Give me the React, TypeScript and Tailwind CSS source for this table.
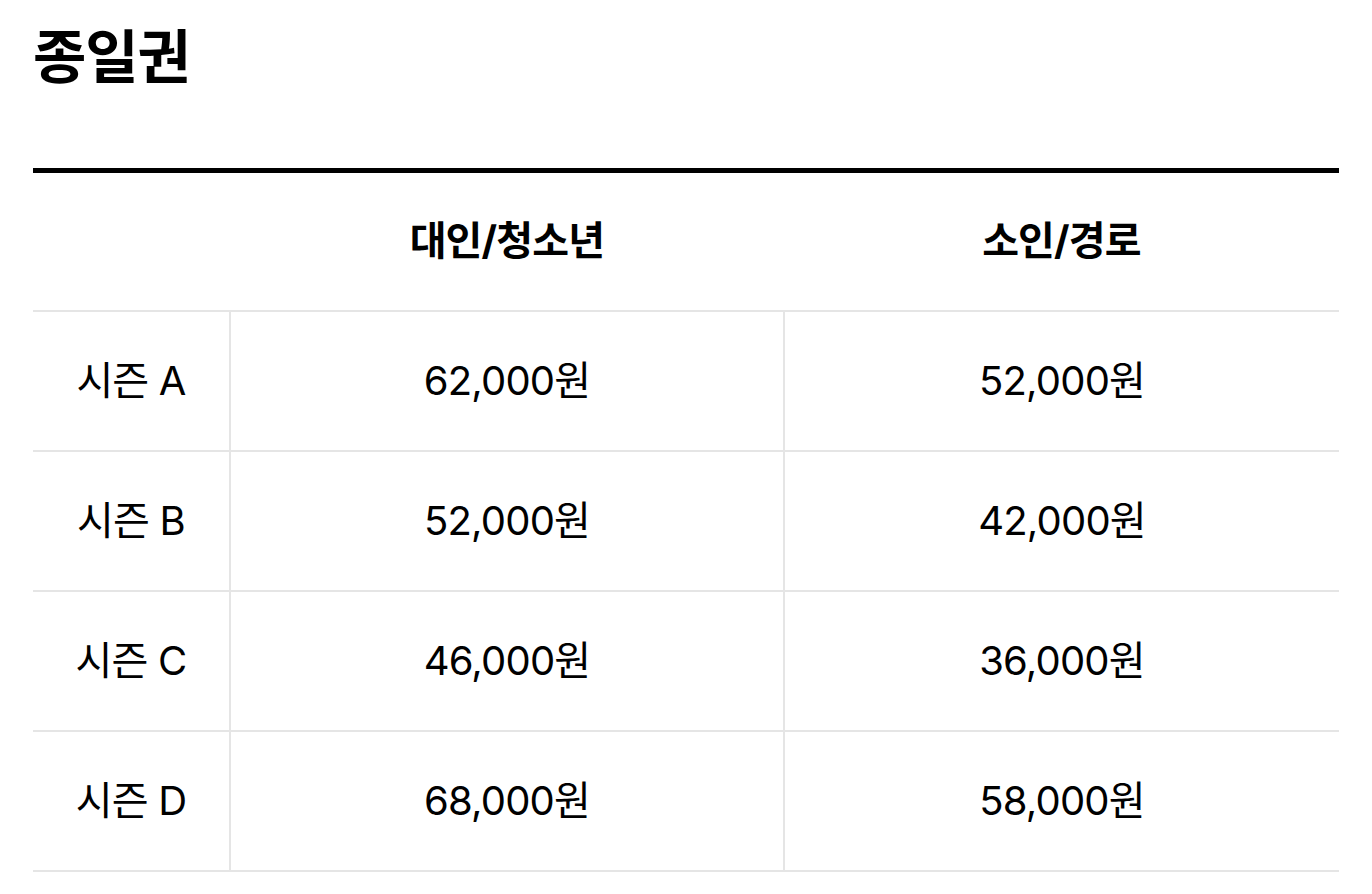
const rows = [
  { season: "시즌 A", adult: "62,000원", child: "52,000원" },
  { season: "시즌 B", adult: "52,000원", child: "42,000원" },
  { season: "시즌 C", adult: "46,000원", child: "36,000원" },
  { season: "시즌 D", adult: "68,000원", child: "58,000원" },
];

export default function App() {
  return (
    <main
      className="min-h-screen bg-white text-black px-[33px] pt-[22px]"
      style={{ fontFamily: "Inter, 'Noto Sans CJK KR', sans-serif" }}
    >
      <h1 className="text-[58px] leading-[70px] font-bold tracking-[-0.02em]">종일권</h1>

      <table className="mt-[76px] w-full table-fixed border-collapse border-t-[5px] border-black text-[40px] tracking-[-0.02em]">
        <colgroup>
          <col className="w-[197px]" />
          <col className="w-[554px]" />
          <col />
        </colgroup>
        <thead>
          <tr className="h-[140px] border-b-2 border-[#e5e5e5]">
            <th></th>
            <th className="font-bold">대인/청소년</th>
            <th className="font-bold">소인/경로</th>
          </tr>
        </thead>
        <tbody>
          {rows.map((row) => (
            <tr key={row.season} className="h-[140px] border-b-2 border-[#e5e5e5]">
              <td className="text-center border-r-2 border-[#e5e5e5]">{row.season}</td>
              <td className="text-center border-r-2 border-[#e5e5e5]">{row.adult}</td>
              <td className="text-center">{row.child}</td>
            </tr>
          ))}
        </tbody>
      </table>
    </main>
  );
}
